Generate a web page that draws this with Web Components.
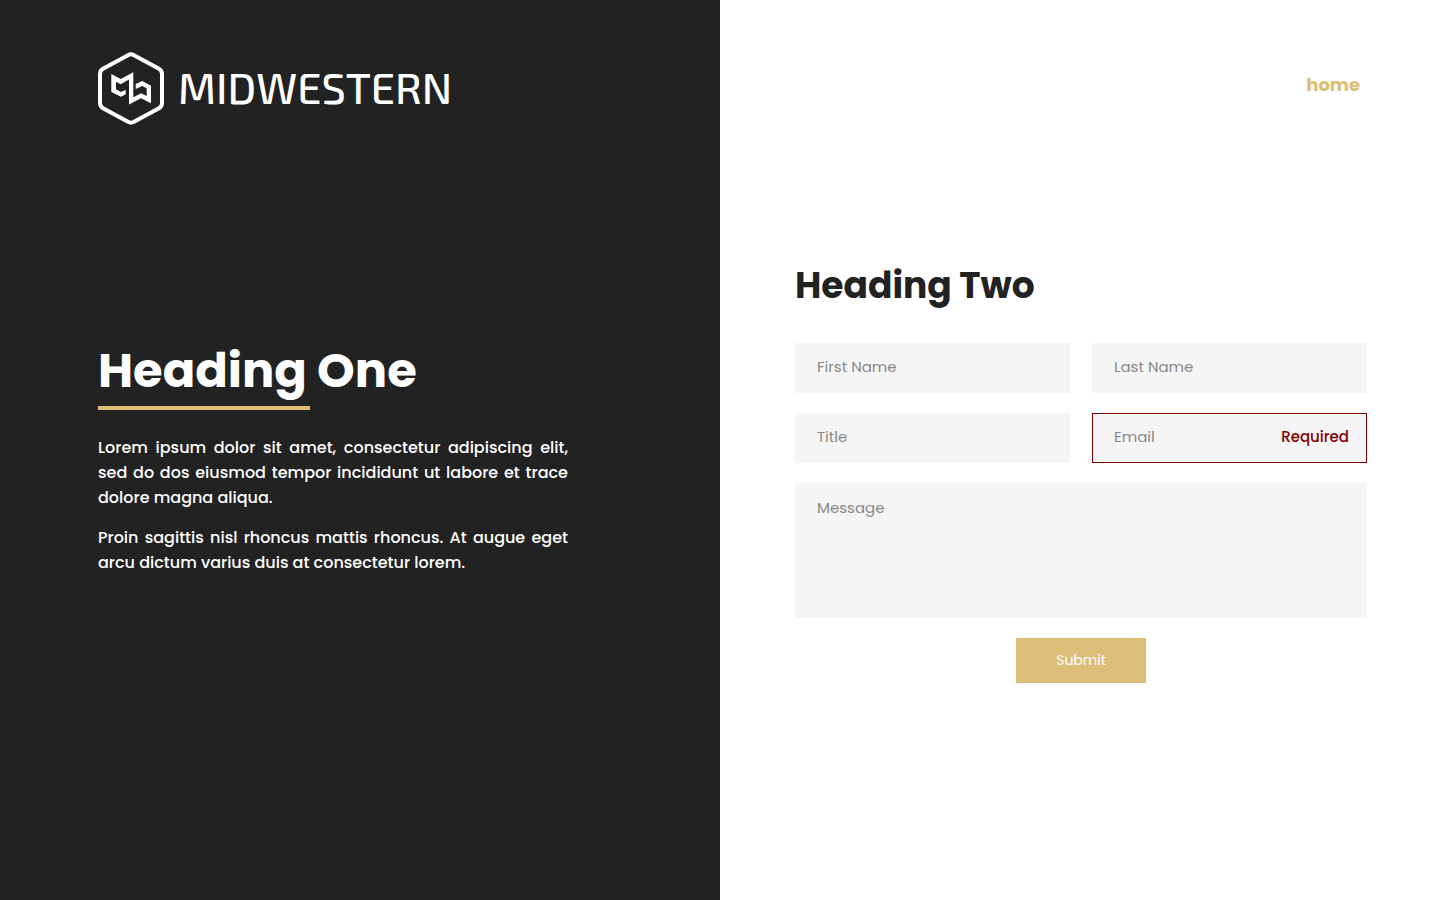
<!DOCTYPE html>
<html lang="en">
<head>
<meta charset="utf-8">
<meta name="viewport" content="width=device-width, initial-scale=1">
<title>Midwestern</title>
<style>
body { margin: 0; font-family: Poppins, Inter, "Open Sans", sans-serif; --dark: #222; --gold: #ddbe78; --field: #f5f5f5; --error: #800000; }
</style>
</head>
<body>
<split-page>
  <brand-panel slot="left">
    <brand-logo slot="logo"></brand-logo>
    <intro-copy>
      <span slot="title">Heading One</span>
      <p>Lorem ipsum dolor sit amet, consectetur adipiscing elit, sed do dos eiusmod tempor incididunt ut labore et trace dolore magna aliqua.</p>
      <p>Proin sagittis nisl rhoncus mattis rhoncus. At augue eget arcu dictum varius duis at consectetur lorem.</p>
    </intro-copy>
  </brand-panel>
  <contact-panel slot="right">
    <nav-link slot="nav" to="#home">home</nav-link>
    <contact-form>Heading Two</contact-form>
  </contact-panel>
</split-page>
<script>
function define(name, html, setup) {
  const template = document.createElement('template');
  template.innerHTML = html;
  customElements.define(name, class extends HTMLElement {
    constructor() {
      super();
      this.attachShadow({ mode: 'open' }).append(template.content.cloneNode(true));
    }
    connectedCallback() {
      if (setup) setup(this, this.shadowRoot);
    }
  });
}

define('split-page', `
<style>
:host { display: grid; grid-template-columns: 1fr 1fr; min-height: 100vh; }
</style>
<slot name="left"></slot><slot name="right"></slot>`);

define('brand-panel', `
<style>
:host { display: grid; grid-template-rows: auto 1fr; box-sizing: border-box; padding: 52px 152px 52px 98px; background: var(--dark); color: #fff; }
main { align-self: center; padding-bottom: 47px; }
</style>
<header><slot name="logo"></slot></header>
<main><slot></slot></main>`);

define('brand-logo', `
<style>
:host { display: block; color: #fff; }
a { display: flex; align-items: flex-start; gap: 14px; color: inherit; text-decoration: none; }
svg { width: 66px; height: 73px; flex: none; }
span { font: 500 43px/70px "Exo 2", Exo, "Noto Sans", "Open Sans", sans-serif; }
</style>
<a href="#home">
<svg viewBox="0 0 66 73" aria-hidden="true">
<path d="M30 3.2Q33 1.5 36 3.2L61 16.8Q64 18.5 64 22V51Q64 54.5 61 56.2L36 69.8Q33 71.5 30 69.8L5 56.2Q2 54.5 2 51V22Q2 18.5 5 16.8Z" fill="none" stroke="currentColor" stroke-width="4"/>
<path d="M13.3 22L22.7 27L35.3 20.3V45.3L43 41.3L48.7 43.9V36.3L44.3 34L37.7 37V32L44.3 29L53 33.7V51.3L43 46.3L31 52.5V27.5L22.7 32.3L18 29.7V37.3L23 40L27.7 37.7V42.3L23 44.7L13.3 40Z" fill="currentColor"/>
</svg>
<span>MIDWESTERN</span>
</a>`);

define('intro-copy', `
<style>
:host { display: block; }
h1 { margin: 0; font-size: 48px; line-height: 70px; font-weight: 700; }
hr { width: 45%; height: 4px; margin: 0 0 25px; border: 0; background: var(--gold); }
::slotted(p) { margin: 0 0 15px; font-size: 16px; line-height: 25px; font-weight: 500; text-align: justify; }
</style>
<h1><slot name="title"></slot></h1>
<hr>
<slot></slot>`);

define('contact-panel', `
<style>
:host { display: grid; grid-template-rows: auto 1fr; box-sizing: border-box; padding: 52px 73px 52px 75px; background: #fff; color: var(--dark); }
nav { display: flex; justify-content: flex-end; align-items: center; height: 65px; padding: 0 7px; }
main { align-self: center; padding-bottom: 24px; }
</style>
<nav><slot name="nav"></slot></nav>
<main><slot></slot></main>`);

define('nav-link', `
<style>
:host { display: block; }
a { display: block; color: var(--gold); font-size: 18px; line-height: 24px; font-weight: 700; text-decoration: none; }
</style>
<a><slot></slot></a>`, (host, root) => {
  root.querySelector('a').href = host.getAttribute('to');
});

define('form-field', `
<style>
:host { display: block; position: relative; }
:host([wide]) { grid-column: 1 / -1; }
input, textarea { display: block; box-sizing: border-box; width: 100%; height: 50px; margin: 0; padding: 0 21px 4px; border: 1px solid var(--field); border-radius: 0; background: var(--field); color: var(--dark); font: 15px/24px Poppins, Inter, "Open Sans", sans-serif; outline: 0; resize: none; }
textarea { height: 135px; padding-top: 12px; }
::placeholder { color: #888; opacity: 1; }
:host([error]) input { border-color: var(--error); }
output { position: absolute; top: 0; right: 18px; font-size: 15px; line-height: 48px; font-weight: 500; color: var(--error); }
</style>`, (host, root) => {
  const control = document.createElement(host.hasAttribute('wide') ? 'textarea' : 'input');
  control.id = 'control';
  control.placeholder = host.getAttribute('label');
  control.setAttribute('aria-label', host.getAttribute('label'));
  root.append(control);
  if (host.hasAttribute('error')) {
    const note = document.createElement('output');
    note.htmlFor = 'control';
    note.textContent = host.getAttribute('error');
    root.append(note);
  }
});

define('contact-form', `
<style>
:host { display: block; }
h2 { margin: 0 0 29px; font-size: 36px; line-height: 56px; font-weight: 700; }
form { display: grid; grid-template-columns: 1fr 1fr; gap: 20px 22px; }
button { grid-column: 1 / -1; justify-self: center; width: 130px; height: 45px; padding: 0 0 2px; border: 0; background: var(--gold); color: #fff; font: 14px/24px Poppins, Inter, "Open Sans", sans-serif; }
</style>
<h2><slot></slot></h2>
<form>
  <form-field label="First Name"></form-field>
  <form-field label="Last Name"></form-field>
  <form-field label="Title"></form-field>
  <form-field label="Email" error="Required"></form-field>
  <form-field label="Message" wide></form-field>
  <button type="submit">Submit</button>
</form>`);
</script>
</body>
</html>
